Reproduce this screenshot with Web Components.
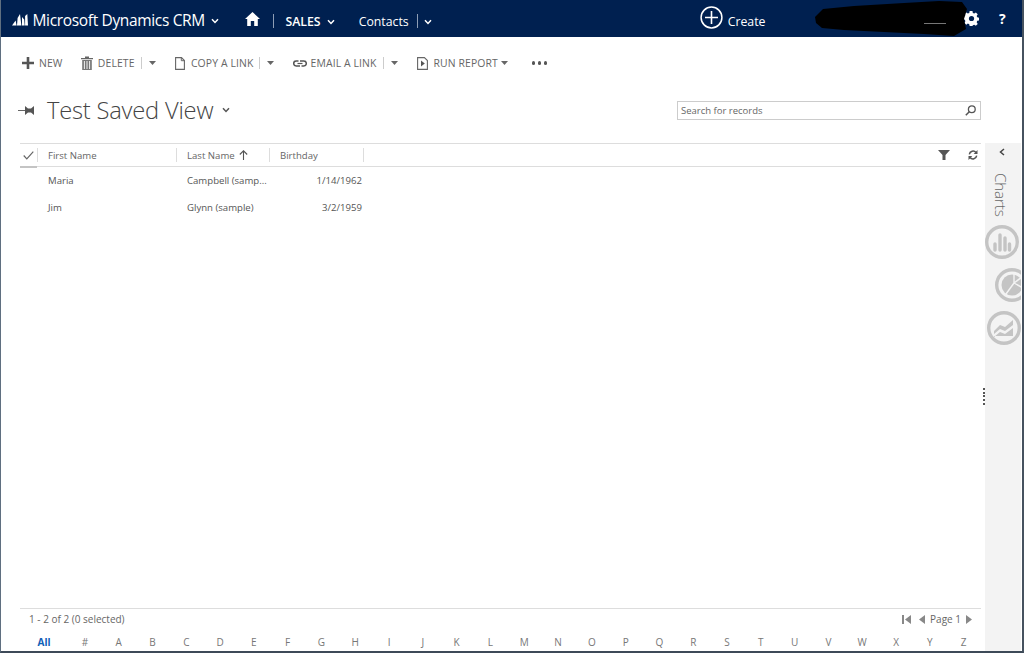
<!DOCTYPE html>
<html>
<head>
<meta charset="utf-8">
<title>Test Saved View</title>
<style>
  html, body { margin: 0; height: 100%; background: #fff; overflow: hidden; }
  body { font-family: "Open Sans", "Liberation Sans", sans-serif; }
</style>
</head>
<body>
<crm-app>
  <crm-navbar slot="top"></crm-navbar>
  <crm-commandbar slot="top"></crm-commandbar>
  <crm-title slot="top"></crm-title>
  <crm-grid slot="main"></crm-grid>
  <crm-footer slot="main"></crm-footer>
  <crm-charts slot="side"></crm-charts>
</crm-app>

<script>
const chevron = (w = 8, c = 'currentColor') => `<svg width="${w}" height="${w * .75}" viewBox="0 0 8 6"><path d="M1 1.2 4 4.4 7 1.2" fill="none" stroke="${c}" stroke-width="1.5"/></svg>`;
const caret = `<svg width="7" height="4" viewBox="0 0 7 4"><path d="M0 0h7L3.5 4z" fill="#666"/></svg>`;

const ICONS = {
  plus: `<svg width="12" height="12" viewBox="0 0 12 12"><path d="M4.7 0h2.6v4.7H12v2.6H7.300V12H4.700V7.300H0V4.700h4.700z" fill="#555"/></svg>`,
  trash: `<svg width="12" height="14" viewBox="0 0 12 14"><path d="M0 2h12v1.300H0zM4 .5h4V2H4z" fill="#666"/><path d="M1.200 4H10.800V14H1.200z" fill="#777"/><path d="M3.400 5v8M6 5v8M8.600 5v8" stroke="#fff" stroke-width=".9"/></svg>`,
  doc: `<svg width="10" height="13" viewBox="0 0 10 13"><path d="M.6.6H6.500L9.400 3.500V12.400H.6z" fill="#fff" stroke="#666" stroke-width="1.100"/><path d="M6.300.8V3.700H9.200" fill="none" stroke="#666"/></svg>`,
  link: `<svg width="14" height="7" viewBox="0 0 14 7" style="flex:none"><path d="M5.500 1H3.200a2.500 2.500 0 0 0 0 5H7M8.500 6h2.300a2.500 2.500 0 0 0 0-5H7" fill="none" stroke="#555" stroke-width="1.500"/><path d="M4.500 3.500H9.500" stroke="#555" stroke-width="1.200"/></svg>`,
  report: `<svg width="11" height="13" viewBox="0 0 11 13"><path d="M.6.6H7.400L10.400 3.600V12.400H.6z" fill="#fff" stroke="#666" stroke-width="1.100"/><path d="M4 3.500 7.800 6.500 4 9.500z" fill="#555"/></svg>`
};

class CrmApp extends HTMLElement {
  constructor() {
    super();
    this.attachShadow({ mode: 'open' });
    this.shadowRoot.innerHTML = `
      <style>
        :host {
          display: flex;
          flex-direction: column;
          box-sizing: border-box;
          width: 1024px;
          height: 653px;
          background: #fff;
          border-left: 1px solid #5f6f80;
          border-right: 2px solid #46525f;
          border-bottom: 2px solid #3d4a58;
          overflow: hidden;
          position: relative;
        }
        #body { flex: 1; display: flex; min-height: 0; }
        #main { flex: none; width: 961px; margin-left: 19px; display: flex; flex-direction: column; }
        #side { flex: none; width: 36px; margin-left: 4px; display: flex; }
      </style>
      <slot name="top"></slot>
      <div id="body">
        <div id="main"><slot name="main"></slot></div>
        <div id="side"><slot name="side"></slot></div>
      </div>`;
  }
}

class CrmNavbar extends HTMLElement {
  constructor() {
    super();
    this.attachShadow({ mode: 'open' });
    this.shadowRoot.innerHTML = `
      <style>
        :host {
          display: flex;
          align-items: center;
          flex: none;
          position: relative;
          height: 37px;
          background: #002050;
          color: #fff;
          font-size: 12.3px;
        }
        .brand { font-size: 15.5px; letter-spacing: -.34px; margin-left: 4.500px; margin-top: 2px; white-space: nowrap; }
        .logo { margin-left: 11px; margin-top: 1px; }
        .c { display: flex; }
        .low { margin-top: 6px; }
        .sep { width: 1px; height: 14px; background: #8d9db5; margin-top: 5px; }
        .b { font-weight: 600; }
        .t { white-space: nowrap; margin-top: 6px; }
        #blob { position: absolute; left: 813px; top: 1px; }
      </style>
      <svg class="logo" width="16" height="13" viewBox="0 0 16 13"><path d="M0 12.500 3.600 7.500 4.600 12.500zM5 12.500 5.600 5 8 1 9.400 12.500zM10 12.500V4L12.200 6.500 12.700 12.500zM13.100 12.500V3L15.300 1 16 12.500z" fill="#fff"/></svg>
      <span class="brand">Microsoft Dynamics CRM</span>
      <span class="c" style="margin-left:6.500px;margin-top:4px">${chevron()}</span>
      <svg style="margin-left:26px;margin-top:1px" width="15" height="14" viewBox="0 0 15 14"><path d="M7.500 0 15 7h-2.200v7H9.200V9H5.800v5H2.200V7H0z" fill="#fff"/></svg>
      <span class="sep" style="margin-left:13px"></span>
      <span class="t b" style="margin-left:11px">SALES</span>
      <span class="c low" style="margin-left:6px">${chevron()}</span>
      <span class="t" style="margin-left:24px">Contacts</span>
      <span class="sep" style="margin-left:8px"></span>
      <span class="c low" style="margin-left:6px">${chevron()}</span>
      <svg style="margin-left:268px;margin-bottom:3px" width="23" height="23" viewBox="0 0 23 23"><circle cx="11.500" cy="11.500" r="10.400" fill="none" stroke="#fff" stroke-width="1.500"/><path d="M11.500 5v13M5 11.500h13" stroke="#fff" stroke-width="1.600"/></svg>
      <span class="t" style="margin-left:5px">Create</span>
      <svg style="margin-left:198px" width="15" height="15" viewBox="0 0 15 15"><path d="M6 0h3l.4 2 1.500.6L12.600 1.500l2 2-1.100 1.700.6 1.500 2 .4v3l-2 .4-.6 1.500 1.100 1.700-2 2-1.700-1.100-1.500.6L9 16H6l-.4-2-1.500-.6-1.700 1.100-2-2 1.100-1.700-.6-1.500-2-.4v-3l2-.4.6-1.500L.400 3.500l2-2 1.700 1.100 1.500-.6z" transform="scale(.94)" fill="#fff"/><circle cx="7.500" cy="7.500" r="2.600" fill="#002050"/></svg>
      <span class="b" style="margin-left:20.500px;font-size:14px;font-weight:700">?</span>
      <svg id="blob" width="155" height="36" viewBox="0 0 155 36"><path d="M1 16 9 8 40 5 90 2 125 0 148 1 153 8 150 18 152 28 140 35 110 33 70 31 30 29 8 27 2 22z" fill="#000"/><path d="M110 22.500h22" stroke="#777" stroke-width="1"/></svg>`;
  }
}

class CrmCommand extends HTMLElement {
  constructor() {
    super();
    this.attachShadow({ mode: 'open' });
  }
  connectedCallback() {
    let menu = this.getAttribute('menu');
    let trail = '';
    if(menu === 'split') trail = `<span class="sep"></span><span class="caret">${caret}</span>`;
    if(menu === 'plain') trail = `<span class="caret tight">${caret}</span>`;
    this.shadowRoot.innerHTML = `
      <style>
        :host { display: flex; align-items: center; height: 16px; color: #666; font-size: 10.400px; letter-spacing: .12px; white-space: nowrap; }
        .icon { display: flex; width: 12px; justify-content: center; margin-right: 5px; }
        .sep { width: 1px; height: 12px; background: #ccc; margin-left: 6px; }
        .caret { display: flex; margin-left: 7px; }
        .tight { margin-left: 3.500px; }
      </style>
      <span class="icon">${ICONS[this.getAttribute('icon')]}</span>
      <span>${this.getAttribute('label')}</span>${trail}`;
  }
}

class CrmCommandbar extends HTMLElement {
  constructor() {
    super();
    this.attachShadow({ mode: 'open' });
    this.shadowRoot.innerHTML = `
      <style>
        :host { display: flex; align-items: center; flex: none; height: 52px; padding-left: 21px; }
        .dots { display: flex; gap: 2.500px; margin-left: 23.500px; }
        .dots i { width: 3.500px; height: 3.500px; border-radius: 50%; background: #555; }
      </style>
      <crm-command icon="plus" label="NEW"></crm-command>
      <crm-command icon="trash" label="DELETE" menu="split" style="margin-left:18.300px"></crm-command>
      <crm-command icon="doc" label="COPY A LINK" menu="split" style="margin-left:18.300px"></crm-command>
      <crm-command icon="link" label="EMAIL A LINK" menu="split" style="margin-left:19.200px"></crm-command>
      <crm-command icon="report" label="RUN REPORT" menu="plain" style="margin-left:19px"></crm-command>
      <span class="dots"><i></i><i></i><i></i></span>`;
  }
}

class CrmTitle extends HTMLElement {
  constructor() {
    super();
    this.attachShadow({ mode: 'open' });
    this.shadowRoot.innerHTML = `
      <style>
        :host { display: flex; align-items: center; flex: none; box-sizing: border-box; height: 54px; padding: 0 0 12px 17px; color: #444; }
        h1 { margin: 0 0 0 12px; font-size: 23.700px; font-weight: 300; letter-spacing: -.2px; white-space: nowrap; }
        .c { display: flex; margin-left: 9px; color: #555; }
        label { display: flex; align-items: center; box-sizing: border-box; width: 304px; height: 19px; margin-left: auto; margin-right: 41px; padding: 0 4px 0 3px; border: 1px solid #ccc; font-size: 9.500px; color: #666; }
        label span { flex: 1; }
      </style>
      <svg width="17" height="9" viewBox="0 0 17 9"><path d="M0 4h8V4.900H0z" fill="#555"/><path d="M7 0l3 2.500h3L16 0v9l-3-2.500H10L7 9z" fill="#555"/></svg>
      <h1>Test Saved View</h1>
      <span class="c">${chevron(8)}</span>
      <label><span>Search for records</span>
        <svg width="11" height="11" viewBox="0 0 11 11"><circle cx="6.800" cy="4.200" r="3.400" fill="none" stroke="#555" stroke-width="1.300"/><path d="M4.300 6.700.8 10.200" stroke="#555" stroke-width="1.500"/></svg>
      </label>`;
  }
}

class CrmGrid extends HTMLElement {
  constructor() {
    super();
    this.attachShadow({ mode: 'open' });
    this.shadowRoot.innerHTML = `
      <style>
        :host { display: block; flex: 1; font-size: 9.600px; color: #666; }
        .row { display: grid; grid-template-columns: 17px 139px 93px 94px 1fr; align-items: center; white-space: nowrap; }
        .head { position: relative; height: 22px; border-top: 1px solid #ddd; border-bottom: 1px solid #ddd; }
        .head > span { display: flex; align-items: center; height: 14px; border-left: 1px solid #ddd; padding-left: 10px; }
        .head > span:first-child { border: 0; padding: 0; justify-content: center; }
        .head > .tools { padding: 0; justify-content: flex-end; gap: 18px; padding-right: 3px; border-left: 1px solid #ddd; }
        .head::after { content: ""; position: absolute; left: 0; bottom: -2px; width: 17px; height: 2px; background: #c4c4c4; }
        .body { height: 27px; color: #555; }
        .body span:nth-child(2), .body span:nth-child(3) { padding-left: 11px; }
        .body span:nth-child(4) { text-align: right; padding-right: 1px; }
      </style>
      <div class="row head">
        <span><svg width="11" height="9" viewBox="0 0 11 9"><path d="M.7 4.500 3.800 7.800 10.300.7" fill="none" stroke="#666" stroke-width="1.200"/></svg></span>
        <span>First Name</span>
        <span>Last Name <svg style="margin-left:4px" width="9" height="10" viewBox="0 0 9 10"><path d="M4.500 10V1M.8 4.500 4.500.8 8.200 4.500" fill="none" stroke="#555" stroke-width="1.100"/></svg></span>
        <span>Birthday</span>
        <span class="tools">
          <svg width="12" height="10" viewBox="0 0 12 10"><path d="M0 0h12L7.500 5V10h-3V5z" fill="#555"/></svg>
          <svg width="10" height="10" viewBox="0 0 10 10"><path d="M1.300 4.300A3.800 3.800 0 0 1 8 2.500M8.700 5.700A3.800 3.800 0 0 1 2 7.500" fill="none" stroke="#555" stroke-width="1.500"/><path d="M9.500 0v4H5.700zM.5 10V6h3.800z" fill="#555"/></svg>
        </span>
      </div>
      <div class="row body"><i></i><span>Maria</span><span>Campbell (samp...</span><span>1/14/1962</span></div>
      <div class="row body"><i></i><span>Jim</span><span>Glynn (sample)</span><span>3/2/1959</span></div>`;
  }
}

class CrmFooter extends HTMLElement {
  constructor() {
    super();
    this.attachShadow({ mode: 'open' });
    let letters = '# A B C D E F G H I J K L M N O P Q R S T U V W X Y Z'.split(' ');
    this.shadowRoot.innerHTML = `
      <style>
        :host { display: block; flex: none; font-size: 10px; color: #666; }
        .status { display: flex; align-items: center; justify-content: space-between; box-sizing: border-box; height: 22px; padding: 0 9px 1px 9px; border-top: 1px solid #ddd; }
        .pager { display: flex; align-items: center; gap: 5px; }
        .alpha { display: grid; grid-template-columns: 48px repeat(27, 33.800px); height: 21px; padding-top: 2px; box-sizing: border-box; align-items: center; text-align: center; font-size: 10px; color: #777; }
        .alpha b { color: #1160b7; font-weight: 700; }
      </style>
      <div class="status">
        <span>1 - 2 of 2 (0 selected)</span>
        <span class="pager">
          <svg width="9" height="9" viewBox="0 0 9 9"><path d="M0 0h2v9H0zM9 0v9L3 4.500z" fill="#888"/></svg>
          <svg style="margin-left:3px" width="6" height="9" viewBox="0 0 6 9"><path d="M6 0v9L0 4.500z" fill="#888"/></svg>
          <span>Page 1</span>
          <svg width="6" height="9" viewBox="0 0 6 9"><path d="M0 0v9L6 4.500z" fill="#888"/></svg>
        </span>
      </div>
      <div class="alpha"><b>All</b>${letters.map(l => `<span>${l}</span>`).join('')}</div>`;
  }
}

class CrmChartIcon extends HTMLElement {
  connectedCallback() {
    if(this.shadowRoot) return;
    this.attachShadow({ mode: 'open' });
    let glyphs = {
      bars: `<path d="M11 26v-6M16 26V11M21 26V14M25.500 26v-6" fill="none" stroke="#c4c4c4" stroke-width="3.400" stroke-linecap="round"/>`,
      pie: `<circle cx="18" cy="18" r="10.500"/><path d="M20 16V6M20 16 28 10M20 16 29 21M20 16 12 27" stroke="#f3f3f3" stroke-width="1.400" fill="none"/>`,
      area: `<path d="M8 21 14 15 19 17 27 10V15L19 21 14 19 8 24zM8 27 14 22 19 24 27 18V26H8z"/>`
    };
    this.shadowRoot.innerHTML = `
      <style>:host { display: block; flex: none; width: 36px; height: 36px; }</style>
      <svg width="36" height="36" viewBox="0 0 36 36" fill="#c4c4c4">
        <circle cx="18" cy="18" r="15.300" fill="none" stroke="#c4c4c4" stroke-width="3.400"/>
        ${glyphs[this.getAttribute('kind')]}
      </svg>`;
  }
}

class CrmCharts extends HTMLElement {
  constructor() {
    super();
    this.attachShadow({ mode: 'open' });
    this.shadowRoot.innerHTML = `
      <style>
        :host { display: flex; flex-direction: column; width: 36px; background: #f3f3f3; overflow: hidden; position: relative; color: #555; }
        .toggle { display: flex; justify-content: center; height: 20px; padding: 5px 3px 0 0; box-sizing: border-box; }
        .label { align-self: flex-start; writing-mode: vertical-rl; font-size: 15.300px; font-weight: 300; line-height: 20px; height: 61px; margin-left: 6px; letter-spacing: -.2px; padding-top: 10px; box-sizing: border-box; color: #666; }
        crm-chart-icon { margin-bottom: 7px; }
      </style>
      <div class="toggle"><svg width="6" height="8" viewBox="0 0 6 8"><path d="M5 1 1.500 4 5 7" fill="none" stroke="#444" stroke-width="1.500"/></svg></div>
      <div class="label">Charts</div>
      <crm-chart-icon kind="bars" style="margin-left:-1px"></crm-chart-icon>
      <crm-chart-icon kind="pie" style="margin-left:9px"></crm-chart-icon>
      <crm-chart-icon kind="area" style="margin-left:1px"></crm-chart-icon>`;
  }
}

class CrmGrip extends HTMLElement {
  connectedCallback() {
    if(this.shadowRoot) return;
    this.attachShadow({ mode: 'open' });
    this.shadowRoot.innerHTML = `
      <style>
        :host { position: absolute; left: 982px; top: 388px; display: flex; flex-direction: column; gap: 1.700px; }
        i { width: 2px; height: 2px; background: #555; }
      </style>
      <i></i><i></i><i></i><i></i><i></i>`;
  }
}

customElements.define('crm-chart-icon', CrmChartIcon);
customElements.define('crm-charts', CrmCharts);
customElements.define('crm-footer', CrmFooter);
customElements.define('crm-grid', CrmGrid);
customElements.define('crm-title', CrmTitle);
customElements.define('crm-command', CrmCommand);
customElements.define('crm-commandbar', CrmCommandbar);
customElements.define('crm-navbar', CrmNavbar);
customElements.define('crm-grip', CrmGrip);
customElements.define('crm-app', CrmApp);
document.querySelector('crm-app').shadowRoot.appendChild(document.createElement('crm-grip'));
</script>
</body>
</html>
